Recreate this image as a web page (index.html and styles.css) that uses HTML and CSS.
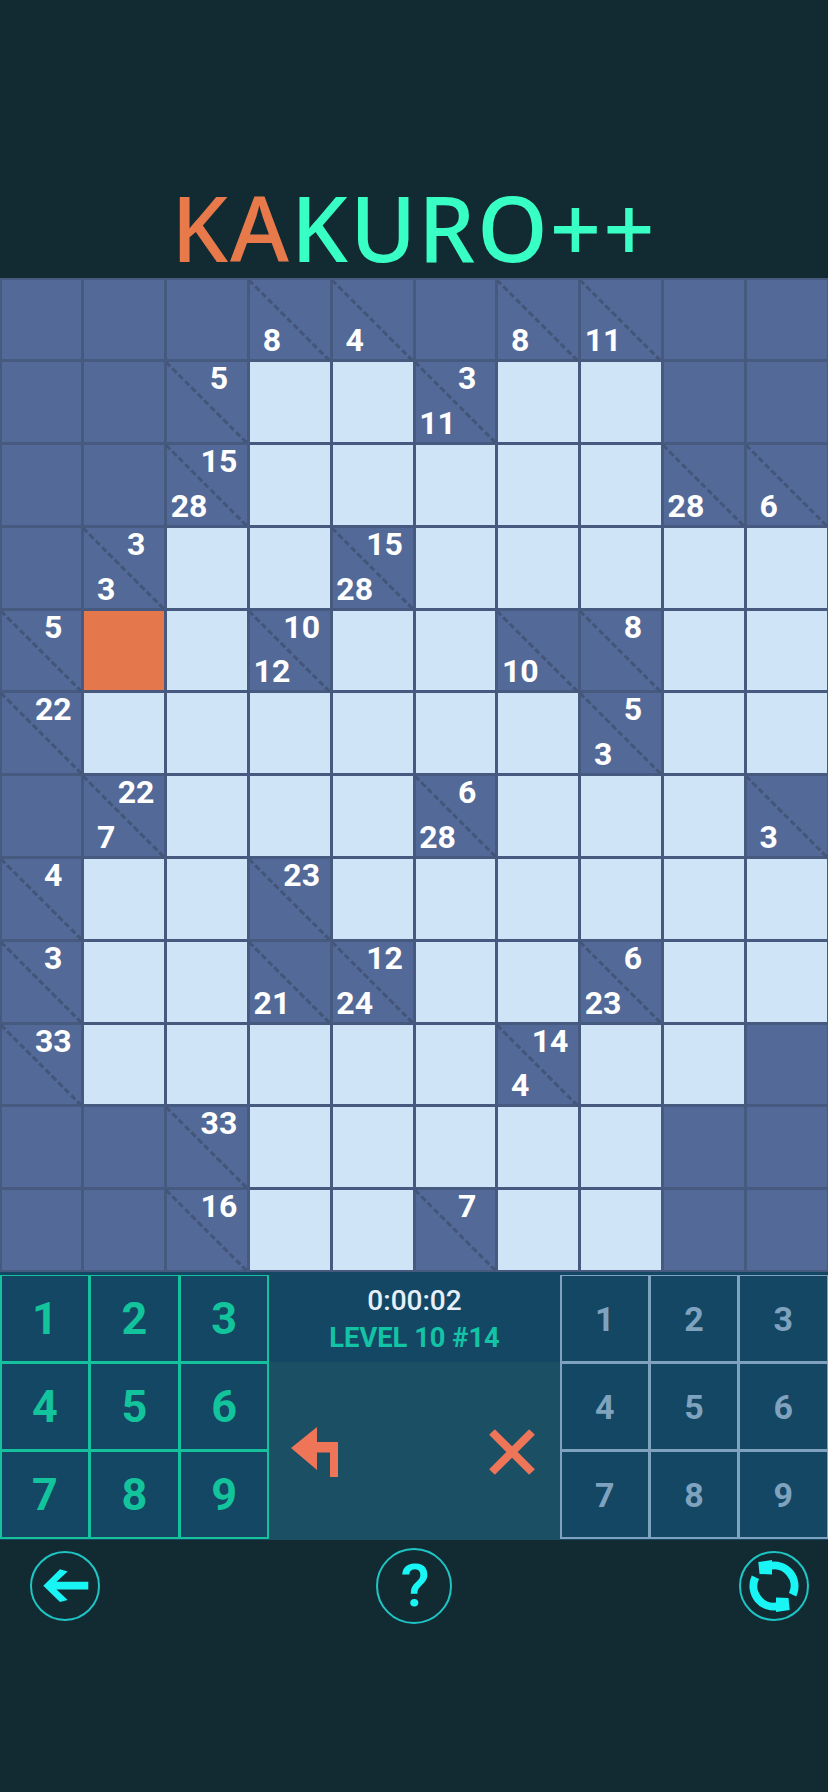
FILE: index.html
```html
<!DOCTYPE html>
<html lang="en">
<head>
    <meta charset="UTF-8">
    <title>Kakuro++</title>
    <link rel="stylesheet" href="styles.css">
</head>
<body>
    <div id="title"><span class="ka">KA</span>KURO++</div>

    <div id="board">
        <!-- row 0 -->
        <div class="c"></div><div class="c"></div><div class="c"></div>
        <div class="c d"><b class="bot">8</b></div><div class="c d"><b class="bot">4</b></div><div class="c"></div>
        <div class="c d"><b class="bot">8</b></div><div class="c d"><b class="bot">11</b></div><div class="c"></div><div class="c"></div>
        <!-- row 1 -->
        <div class="c"></div><div class="c"></div><div class="c d"><b class="top">5</b></div>
        <div class="w"></div><div class="w"></div><div class="c d"><b class="top">3</b><b class="bot">11</b></div>
        <div class="w"></div><div class="w"></div><div class="c"></div><div class="c"></div>
        <!-- row 2 -->
        <div class="c"></div><div class="c"></div><div class="c d"><b class="top">15</b><b class="bot">28</b></div>
        <div class="w"></div><div class="w"></div><div class="w"></div>
        <div class="w"></div><div class="w"></div><div class="c d"><b class="bot">28</b></div><div class="c d"><b class="bot">6</b></div>
        <!-- row 3 -->
        <div class="c"></div><div class="c d"><b class="top">3</b><b class="bot">3</b></div><div class="w"></div>
        <div class="w"></div><div class="c d"><b class="top">15</b><b class="bot">28</b></div><div class="w"></div>
        <div class="w"></div><div class="w"></div><div class="w"></div><div class="w"></div>
        <!-- row 4 -->
        <div class="c d"><b class="top">5</b></div><div class="o"></div><div class="w"></div>
        <div class="c d"><b class="top">10</b><b class="bot">12</b></div><div class="w"></div><div class="w"></div>
        <div class="c d"><b class="bot">10</b></div><div class="c d"><b class="top">8</b></div><div class="w"></div><div class="w"></div>
        <!-- row 5 -->
        <div class="c d"><b class="top">22</b></div><div class="w"></div><div class="w"></div>
        <div class="w"></div><div class="w"></div><div class="w"></div>
        <div class="w"></div><div class="c d"><b class="top">5</b><b class="bot">3</b></div><div class="w"></div><div class="w"></div>
        <!-- row 6 -->
        <div class="c"></div><div class="c d"><b class="top">22</b><b class="bot">7</b></div><div class="w"></div>
        <div class="w"></div><div class="w"></div><div class="c d"><b class="top">6</b><b class="bot">28</b></div>
        <div class="w"></div><div class="w"></div><div class="w"></div><div class="c d"><b class="bot">3</b></div>
        <!-- row 7 -->
        <div class="c d"><b class="top">4</b></div><div class="w"></div><div class="w"></div>
        <div class="c d"><b class="top">23</b></div><div class="w"></div><div class="w"></div>
        <div class="w"></div><div class="w"></div><div class="w"></div><div class="w"></div>
        <!-- row 8 -->
        <div class="c d"><b class="top">3</b></div><div class="w"></div><div class="w"></div>
        <div class="c d"><b class="bot">21</b></div><div class="c d"><b class="top">12</b><b class="bot">24</b></div><div class="w"></div>
        <div class="w"></div><div class="c d"><b class="top">6</b><b class="bot">23</b></div><div class="w"></div><div class="w"></div>
        <!-- row 9 -->
        <div class="c d"><b class="top">33</b></div><div class="w"></div><div class="w"></div>
        <div class="w"></div><div class="w"></div><div class="w"></div>
        <div class="c d"><b class="top">14</b><b class="bot">4</b></div><div class="w"></div><div class="w"></div><div class="c"></div>
        <!-- row 10 -->
        <div class="c"></div><div class="c"></div><div class="c d"><b class="top">33</b></div>
        <div class="w"></div><div class="w"></div><div class="w"></div>
        <div class="w"></div><div class="w"></div><div class="c"></div><div class="c"></div>
        <!-- row 11 -->
        <div class="c"></div><div class="c"></div><div class="c d"><b class="top">16</b></div>
        <div class="w"></div><div class="w"></div><div class="c d"><b class="top">7</b></div>
        <div class="w"></div><div class="w"></div><div class="c"></div><div class="c"></div>
    </div>

    <div id="panel">
        <div class="pad main">
            <span>1</span><span>2</span><span>3</span>
            <span>4</span><span>5</span><span>6</span>
            <span>7</span><span>8</span><span>9</span>
        </div>
        <div id="middle">
            <div id="info">
                <div id="time">0:00:02</div>
                <div id="level">LEVEL 10 #14</div>
            </div>
            <div id="tools">
                <svg width="48" height="50" viewBox="0 0 48 50"><polygon fill="#ef7558" points="0,21 26,0 26,15 47,15 47,50 39,50 39,25.5 26,25.5 26,43"/></svg>
                <svg width="48" height="48" viewBox="0 0 48 48"><path d="M4 4L44 44M44 4L4 44" stroke="#ef7558" stroke-width="8" fill="none"/></svg>
            </div>
        </div>
        <div class="pad notes">
            <span>1</span><span>2</span><span>3</span>
            <span>4</span><span>5</span><span>6</span>
            <span>7</span><span>8</span><span>9</span>
        </div>
    </div>

    <div id="foot">
        <div class="round">
            <svg width="66" height="66" viewBox="2 2 66 66"><polygon fill="#19f4f4" points="13.3,34.7 30,18.3 37.7,20.5 26.5,30.7 58.3,30.7 58.3,38.5 26.5,38.5 37.7,49 30,51"/></svg>
        </div>
        <div class="round help">?</div>
        <div class="round">
            <svg width="66" height="66" viewBox="2 2 66 66">
                <path d="M30 15.1A20.5 20.5 0 0 1 53.6 43.7" stroke="#19f4f4" stroke-width="8" fill="none"/>
                <polygon fill="#19f4f4" points="19.3,11 33,9 33,23.5 20.5,23"/>
                <path d="M40 54.9A20.5 20.5 0 0 1 16.4 26.3" stroke="#19f4f4" stroke-width="8" fill="none"/>
                <polygon fill="#19f4f4" points="50.7,59 37,61 37,46.5 49.5,47"/>
            </svg>
        </div>
    </div>
</body>
</html>
```

FILE: styles.css
```css
*{
    margin: 0;
    padding: 0;
    box-sizing: border-box;
}
body{
    width: 828px;
    height: 1792px;
    overflow: hidden;
    background: #122b33;
    font-family: Roboto, sans-serif;
}
#title{
    height: 278px;
    padding-top: 172px;
    text-align: center;
    font-family: "Noto Sans", sans-serif;
    font-size: 90px;
    font-weight: 500;
    letter-spacing: 2px;
    line-height: 110px;
    color: #38ffc4;
}
.ka{
    color: #e8794a;
}
#board{
    display: grid;
    grid-template-columns: repeat(10, 1fr);
    grid-auto-rows: 79.8px;
    gap: 3px;
    padding: 1.5px;
    height: 993.6px;
    background: #46597f;
}
.c, .w, .o{
    position: relative;
    display: flex;
    flex-direction: column;
}
.c{
    background: #536a98;
}
.w{
    background: #d0e4f8;
}
.o{
    background: #e4784c;
}
.d::before{
    content: "";
    position: absolute;
    left: 0;
    top: -1px;
    width: 114px;
    height: 3px;
    transform-origin: 0 0;
    transform: rotate(45deg);
    background: repeating-linear-gradient(90deg, #435579 0, #435579 6px, transparent 6px, transparent 9px);
}
.c b{
    position: relative;
    width: 44px;
    font-size: 32px;
    line-height: 32px;
    font-weight: 700;
    text-align: center;
    color: #fff;
}
.top{
    align-self: flex-end;
    margin: 0 6px 0 0;
}
.bot{
    align-self: flex-start;
    margin: auto 0 3px 0;
}
#panel{
    display: flex;
    height: 268px;
    padding-top: 3px;
    background: #144763;
}
.pad{
    display: grid;
    grid-template-columns: repeat(3, 1fr);
    grid-auto-rows: 85px;
    gap: 3px;
    padding: 1.5px;
    width: 269px;
    height: 264px;
}
.pad span{
    display: flex;
    align-items: center;
    justify-content: center;
    background: #144763;
    font-weight: 700;
}
.main{
    background: #14c39e;
    color: #13c39b;
    font-size: 45px;
}
.notes{
    width: 268px;
    background: #7fa3bf;
    color: #7fa3bf;
    font-size: 34px;
}
#middle{
    flex: 1;
    display: flex;
    flex-direction: column;
    margin-top: -3px;
    text-align: center;
}
#info{
    height: 90px;
    padding-top: 10px;
}
#time{
    font-size: 28px;
    line-height: 37px;
    font-weight: 500;
    color: #e6f0fa;
}
#level{
    font-size: 27.3px;
    line-height: 38px;
    font-weight: 700;
    color: #13c3a5;
}
#tools{
    flex: 1;
    display: flex;
    align-items: center;
    justify-content: space-between;
    padding: 3px 24px 0 22px;
    background: #1b5064;
}
#foot{
    display: flex;
    padding: 11px 19px 0 30px;
}
.round{
    display: flex;
    align-items: center;
    justify-content: center;
    width: 70px;
    height: 70px;
    border: 2px solid #1fc5c5;
    border-radius: 50%;
}
.help{
    width: 76px;
    height: 76px;
    margin: -3px 287px 0 276px;
    padding-left: 2px;
    font-size: 60px;
    font-weight: 500;
    color: #19f4f4;
}
```
